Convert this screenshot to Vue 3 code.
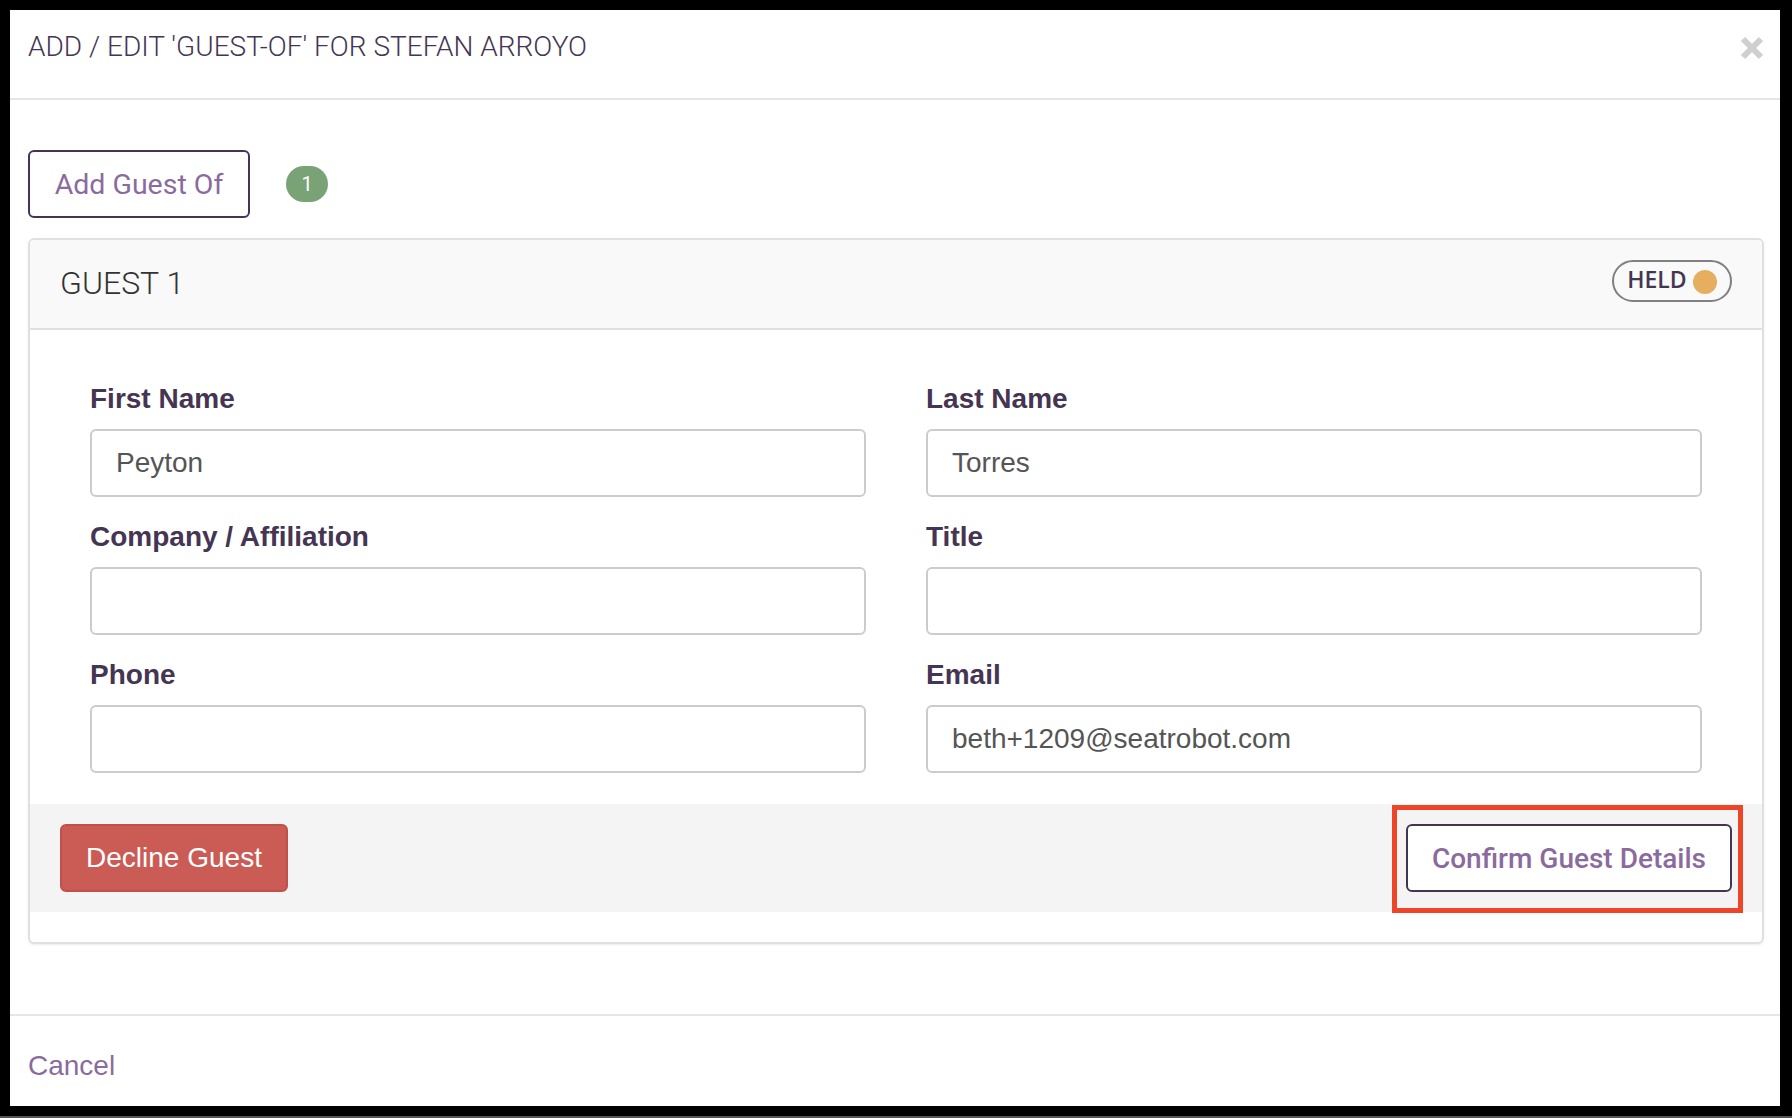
<script setup>
const rows = [
  [
    { label: 'First Name', value: 'Peyton' },
    { label: 'Last Name', value: 'Torres' }
  ],
  [
    { label: 'Company / Affiliation', value: '' },
    { label: 'Title', value: '' }
  ],
  [
    { label: 'Phone', value: '' },
    { label: 'Email', value: 'beth+1209@seatrobot.com' }
  ]
]
</script>

<template>
  <div class="frame">
    <div class="modal">
      <div class="modal-header">
        <h4 class="modal-title">ADD / EDIT 'GUEST-OF' FOR STEFAN ARROYO</h4>
        <svg class="close-icon" viewBox="0 0 24 24" width="24" height="24">
          <path d="M3 3 L21 21 M21 3 L3 21" stroke="#cfcfcf" stroke-width="6" fill="none" />
        </svg>
      </div>

      <div class="modal-body">
        <div class="add-row">
          <button class="btn-outline add-btn">Add Guest Of</button>
          <span class="count-badge">1</span>
        </div>

        <div class="panel">
          <div class="panel-heading">
            <span class="panel-title">GUEST 1</span>
            <span class="status-pill"><span class="status-text">HELD</span> <i class="status-dot"></i></span>
          </div>
          <div class="panel-body">
            <div v-for="(row, i) in rows" :key="i" class="form-row">
              <div v-for="field in row" :key="field.label" class="form-group">
                <label>{{ field.label }}</label>
                <input type="text" :value="field.value" class="form-control" />
              </div>
            </div>
          </div>
          <div class="panel-footer">
            <button class="btn-danger">Decline Guest</button>
            <button class="btn-outline confirm-btn">Confirm Guest Details</button>
            <div class="highlight-box"></div>
          </div>
        </div>
      </div>

      <div class="modal-footer">
        <a class="cancel-link">Cancel</a>
      </div>
    </div>
  </div>
</template>

<style>
html, body {
  margin: 0;
  background: #000;
}
</style>

<style scoped>
.frame {
  box-sizing: border-box;
  width: 1792px;
  height: 1118px;
  padding: 10px 12px 10px 10px;
  background: #000;
  border-bottom: 2px solid #555;
}

.modal {
  height: 1096px;
  background: #fff;
  display: flex;
  flex-direction: column;
  font-family: "Liberation Sans", Arial, sans-serif;
}

.modal-header {
  box-sizing: border-box;
  height: 90px;
  padding: 0 16px 0 18px;
  display: flex;
  justify-content: space-between;
  align-items: flex-start;
  border-bottom: 2px solid #e5e5e5;
}

.modal-title {
  margin: 21px 0 0;
  font-family: Roboto, sans-serif;
  font-weight: 300;
  font-size: 28px;
  line-height: 32px;
  color: #453553;
}

.close-icon {
  margin-top: 26px;
}

.modal-body {
  flex: 1;
  padding: 50px 16px 0 18px;
}

.add-row {
  display: flex;
  align-items: center;
  gap: 36px;
  margin-bottom: 20px;
}

.btn-outline {
  box-sizing: border-box;
  height: 68px;
  background: #fff;
  border: 2px solid #453553;
  border-radius: 6px;
  color: #8b6b9e;
  font-family: Roboto, sans-serif;
  font-size: 28.5px;
  cursor: pointer;
}

.add-btn {
  width: 222px;
  padding: 0;
}

.count-badge {
  width: 42px;
  height: 36px;
  border-radius: 18px;
  background: #7aa277;
  color: #fff;
  font-family: Roboto, sans-serif;
  font-size: 20px;
  display: flex;
  align-items: center;
  justify-content: center;
}

.panel {
  border: 2px solid #e0e0e0;
  border-radius: 6px;
  box-shadow: 0 1px 2px rgba(0, 0, 0, 0.08);
}

.panel-heading {
  box-sizing: border-box;
  height: 90px;
  padding: 0 30px;
  background: #f9f9f9;
  border-bottom: 2px solid #e0e0e0;
  border-radius: 6px 6px 0 0;
  display: flex;
  justify-content: space-between;
  align-items: center;
}

.panel-title {
  font-family: Roboto, sans-serif;
  font-weight: 300;
  font-size: 32px;
  color: #333;
  margin-top: -2px;
}

.status-pill {
  box-sizing: border-box;
  height: 42px;
  width: 120px;
  margin-top: -6px;
  border: 2px solid #808080;
  border-radius: 21px;
  display: flex;
  align-items: center;
  justify-content: center;
  gap: 6px;
  font-family: "Open Sans", sans-serif;
  font-weight: 600;
  font-size: 23px;
  color: #453553;
}

.status-text {
  margin-top: -4px;
}

.status-dot {
  width: 24px;
  height: 24px;
  border-radius: 50%;
  background: #e6ae5f;
  margin-top: 2px;
}

.panel-body {
  padding: 51px 60px 9px;
}

.form-row {
  display: grid;
  grid-template-columns: 776px 776px;
  column-gap: 60px;
}

.form-group {
  margin-bottom: 22px;
}

.form-group label {
  display: block;
  margin-bottom: 12px;
  font-size: 28px;
  line-height: 36px;
  font-weight: 700;
  color: #453553;
}

.form-control {
  box-sizing: border-box;
  display: block;
  width: 100%;
  height: 68px;
  padding: 0 24px;
  background: #fff;
  border: 2px solid #ccc;
  border-radius: 6px;
  font-family: "Liberation Sans", Arial, sans-serif;
  font-size: 28px;
  color: #555;
  outline: none;
}

.panel-footer {
  position: relative;
  box-sizing: border-box;
  height: 108px;
  margin-bottom: 30px;
  padding: 0 30px;
  background: #f4f4f4;
  display: flex;
  justify-content: space-between;
  align-items: center;
}

.btn-danger {
  box-sizing: border-box;
  width: 228px;
  height: 68px;
  background: #cb5c55;
  border: 2px solid #c0504a;
  border-radius: 6px;
  color: #fff;
  font-family: "Liberation Sans", Arial, sans-serif;
  font-size: 28px;
  cursor: pointer;
}

.confirm-btn {
  width: 326px;
  padding: 0;
  font-weight: 500;
  font-size: 28px;
}

.highlight-box {
  position: absolute;
  top: 1px;
  right: 19px;
  width: 351px;
  height: 108px;
  box-sizing: border-box;
  border: 5px solid #ee4427;
  pointer-events: none;
}

.modal-footer {
  box-sizing: border-box;
  height: 92px;
  padding: 10px 18px 0;
  border-top: 2px solid #e5e5e5;
  display: flex;
  align-items: center;
}

.cancel-link {
  font-size: 28px;
  color: #8b6b9e;
}
</style>
